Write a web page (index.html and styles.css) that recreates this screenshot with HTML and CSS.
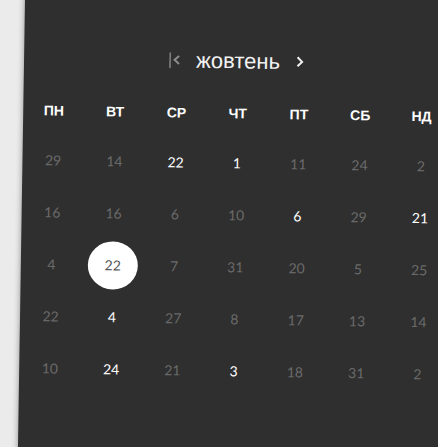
FILE: index.html
```html
<!DOCTYPE html>
<html lang="uk">
<head>
<meta charset="utf-8">
<meta name="viewport" content="width=device-width, initial-scale=1">
<title>жовтень</title>
<link rel="stylesheet" href="styles.css">
</head>
<body>
<main class="panel">
  <header class="month">
    <button class="nav nav-prev" type="button" aria-label="Попередній місяць">
      <svg width="11" height="16" viewBox="0 0 11 16" fill="none"><path d="M1 0V16" stroke="#9a9a9a" stroke-width="1.2"/><path d="M10 3.5L5.5 7.5L10 11.5" stroke="#8c8c8c" stroke-width="2"/></svg>
    </button>
    <h1 class="month-name">жовтень</h1>
    <button class="nav" type="button" aria-label="Наступний місяць">
      <svg width="8" height="16" viewBox="0 0 8 16" fill="none"><path d="M1.5 3L6 7.5L1.5 12" stroke="#f2f2f2" stroke-width="2"/></svg>
    </button>
  </header>
  <table class="days">
    <thead>
      <tr><th scope="col">ПН</th><th scope="col">ВТ</th><th scope="col">СР</th><th scope="col">ЧТ</th><th scope="col">ПТ</th><th scope="col">СБ</th><th scope="col">НД</th></tr>
    </thead>
    <tbody>
      <tr>
        <td><button class="day" type="button">29</button></td>
        <td><button class="day" type="button">14</button></td>
        <td><button class="day open" type="button">22</button></td>
        <td><button class="day open" type="button">1</button></td>
        <td><button class="day" type="button">11</button></td>
        <td><button class="day" type="button">24</button></td>
        <td><button class="day" type="button">2</button></td>
      </tr>
      <tr>
        <td><button class="day" type="button">16</button></td>
        <td><button class="day" type="button">16</button></td>
        <td><button class="day" type="button">6</button></td>
        <td><button class="day" type="button">10</button></td>
        <td><button class="day open" type="button">6</button></td>
        <td><button class="day" type="button">29</button></td>
        <td><button class="day open" type="button">21</button></td>
      </tr>
      <tr>
        <td><button class="day" type="button">4</button></td>
        <td><button class="day selected" type="button" aria-pressed="true">22</button></td>
        <td><button class="day" type="button">7</button></td>
        <td><button class="day" type="button">31</button></td>
        <td><button class="day" type="button">20</button></td>
        <td><button class="day" type="button">5</button></td>
        <td><button class="day" type="button">25</button></td>
      </tr>
      <tr>
        <td><button class="day" type="button">22</button></td>
        <td><button class="day open" type="button">4</button></td>
        <td><button class="day" type="button">27</button></td>
        <td><button class="day" type="button">8</button></td>
        <td><button class="day" type="button">17</button></td>
        <td><button class="day" type="button">13</button></td>
        <td><button class="day" type="button">14</button></td>
      </tr>
      <tr>
        <td><button class="day" type="button">10</button></td>
        <td><button class="day open" type="button">24</button></td>
        <td><button class="day" type="button">21</button></td>
        <td><button class="day open" type="button">3</button></td>
        <td><button class="day" type="button">18</button></td>
        <td><button class="day" type="button">31</button></td>
        <td><button class="day" type="button">2</button></td>
      </tr>
    </tbody>
  </table>
</main>
</body>
</html>
```
FILE: styles.css
```css
* {
  box-sizing: border-box;
}

html,
body {
  margin: 0;
  height: 100%;
  overflow: hidden;
  background: #ebebeb;
}

/* The sheet leans slightly and runs past the top, right and bottom edges. */
.panel {
  margin: -20px -40px 0 25px;
  padding: 62px 24px 0 0;
  min-height: calc(100vh + 60px);
  background: #2f2f2f;
  box-shadow: 0 0 6px rgba(0, 0, 0, 0.4);
  color: #fff;
  font-family: "Liberation Sans", Arial, sans-serif;
  transform: rotate(0.9deg);
  transform-origin: 0 20px;
}

.month {
  display: flex;
  align-items: center;
  justify-content: center;
  gap: 16px;
  height: 32px;
  margin-bottom: 12px;
  padding-right: 4px;
}

.month-name {
  margin: 0;
  font-size: 22px;
  line-height: 32px;
  font-weight: 400;
  color: #f2f2f2;
}

.nav {
  display: flex;
  padding: 0;
  border: 0;
  background: none;
  cursor: pointer;
}

.days {
  width: 100%;
  table-layout: fixed;
  border-collapse: collapse;
}

.days th {
  height: 48px;
  padding: 0;
  font-size: 14px;
  font-weight: 700;
  text-align: center;
}

.days td {
  height: 52px;
  padding: 0;
  text-align: center;
}

.day {
  display: block;
  width: 50px;
  height: 48px;
  margin: 0 auto;
  padding: 0;
  border: 0;
  border-radius: 50%;
  background: none;
  color: #6a6a6a;
  font-family: Lato, sans-serif;
  font-size: 14px;
  line-height: 48px;
  cursor: pointer;
}

.day.open {
  color: #fff;
}

.day.selected {
  background: #fff;
  color: #555;
}
```
